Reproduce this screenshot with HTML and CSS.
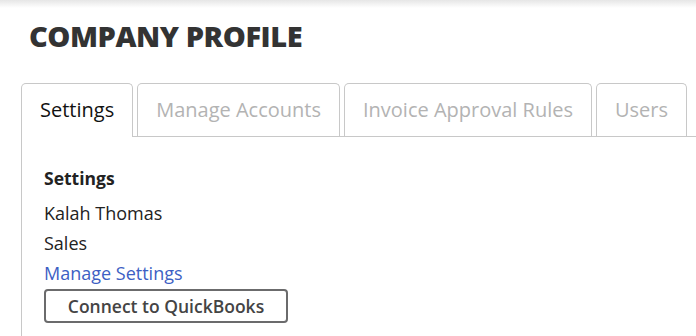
FILE: index.html
```html
<!DOCTYPE html>
<html>
<head>
  <title>Company Profile</title>
  <link rel="stylesheet" href="styles.css">
</head>
<body>
<div class="page">
  <h1>COMPANY PROFILE</h1>
  <ul class="tabs">
    <li class="tab active">Settings</li>
    <li class="tab">Manage Accounts</li>
    <li class="tab">Invoice Approval Rules</li>
    <li class="tab">Users</li>
  </ul>
  <div class="panel">
    <h2>Settings</h2>
    <p>Kalah Thomas</p>
    <p>Sales</p>
    <a href="#" class="link">Manage Settings</a>
    <button class="btn">Connect to QuickBooks</button>
  </div>
</div>
</body>
</html>
```

FILE: styles.css
```css
body {
    margin: 0;
    padding: 0;
    background-color: #ffffff;
    font-family: "Open Sans", Arial, sans-serif;
    color: #222222;
}

.page {
    background: linear-gradient(#e6e6e6, #ffffff 8px);
    padding: 16px 0 0 21px;
    height: 320px;
    overflow: hidden;
}

h1 {
    margin: 0 0 27px 8px;
    font-size: 29px;
    line-height: 40px;
    font-weight: 800;
    color: #333333;
    letter-spacing: -0.45px;
}

.tabs {
    display: flex;
    gap: 4px;
    list-style: none;
    margin: 0;
    padding: 0;
    border-bottom: 1px solid #c8c8c8;
}

.tab {
    height: 52px;
    line-height: 52px;
    padding: 0 18px;
    font-size: 20px;
    color: #b3b3b3;
    border: 1px solid #c8c8c8;
    border-bottom: none;
    border-radius: 5px 5px 0 0;
}

.tab.active {
    color: #111111;
    background-color: #ffffff;
    margin-bottom: -1px;
    height: 53px;
}

.panel {
    border-left: 1px solid #c8c8c8;
    padding: 30px 0 0 22px;
    height: 200px;
}

h2 {
    margin: 0 0 13px 0;
    font-size: 17.5px;
    font-weight: 700;
    color: #222222;
    line-height: 22px;
}

.panel p {
    margin: 0 0 8px 0;
    font-size: 18px;
    line-height: 22px;
}

.link {
    display: block;
    font-size: 18px;
    line-height: 22px;
    color: #3d5fc4;
    text-decoration: none;
}

.btn {
    margin-top: 5px;
    width: 244px;
    height: 34px;
    background-color: #ffffff;
    border: 2px solid #6b6b6c;
    border-radius: 4px;
    font-family: "Open Sans", Arial, sans-serif;
    font-size: 17.5px;
    font-weight: 600;
    color: #444444;
    padding: 0;
}
```
